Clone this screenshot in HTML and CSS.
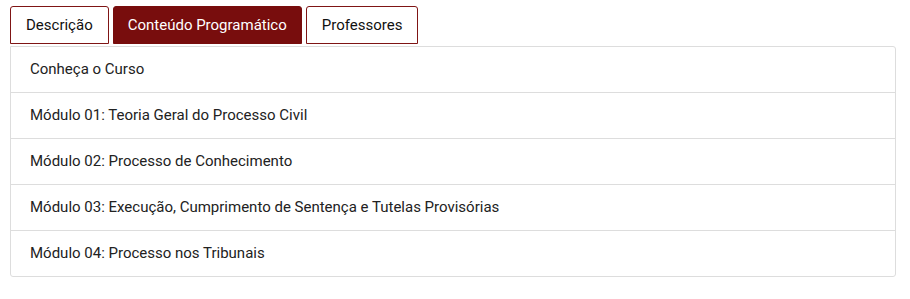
FILE: index.html
```html
<!DOCTYPE html>
<html lang="pt">
<head>
<meta charset="utf-8">
<link rel="stylesheet" href="styles.css">
</head>
<body>
<div class="wrap">
  <ul class="tabs">
    <li class="tab">Descrição</li>
    <li class="tab active">Conteúdo Programático</li>
    <li class="tab">Professores</li>
  </ul>
  <div class="panel">
    <div class="row">Conheça o Curso</div>
    <div class="row">Módulo 01: Teoria Geral do Processo Civil</div>
    <div class="row">Módulo 02: Processo de Conhecimento</div>
    <div class="row">Módulo 03: Execução, Cumprimento de Sentença e Tutelas Provisórias</div>
    <div class="row">Módulo 04: Processo nos Tribunais</div>
  </div>
</div>
</body>
</html>
```
FILE: styles.css
```css
html, body { margin: 0; padding: 0; background: #fff; }
body { font-family: Roboto, "Noto Sans", sans-serif; color: #222; }
.wrap { padding: 6px 14px 0 10px; }
.tabs { list-style: none; margin: 0; padding: 0; display: flex; gap: 4px; }
.tab {
  height: 36px; line-height: 37px; padding: 0 15px;
  border: 1px solid #7f1515; border-radius: 3px 3px 0 0;
  font-size: 15px; color: #111; background: #fff;
}
.tab.active { background: #780d0d; border-color: #780d0d; color: #fff; padding: 0 14px; }
.panel {
  margin-top: 2px; border: 1px solid #ddd; border-radius: 0 3px 3px 3px;
}
.row {
  height: 45px; line-height: 45px; padding: 0 19px;
  border-bottom: 1px solid #ddd; font-size: 15px;
}
.row:last-child { border-bottom: 0; }
```
